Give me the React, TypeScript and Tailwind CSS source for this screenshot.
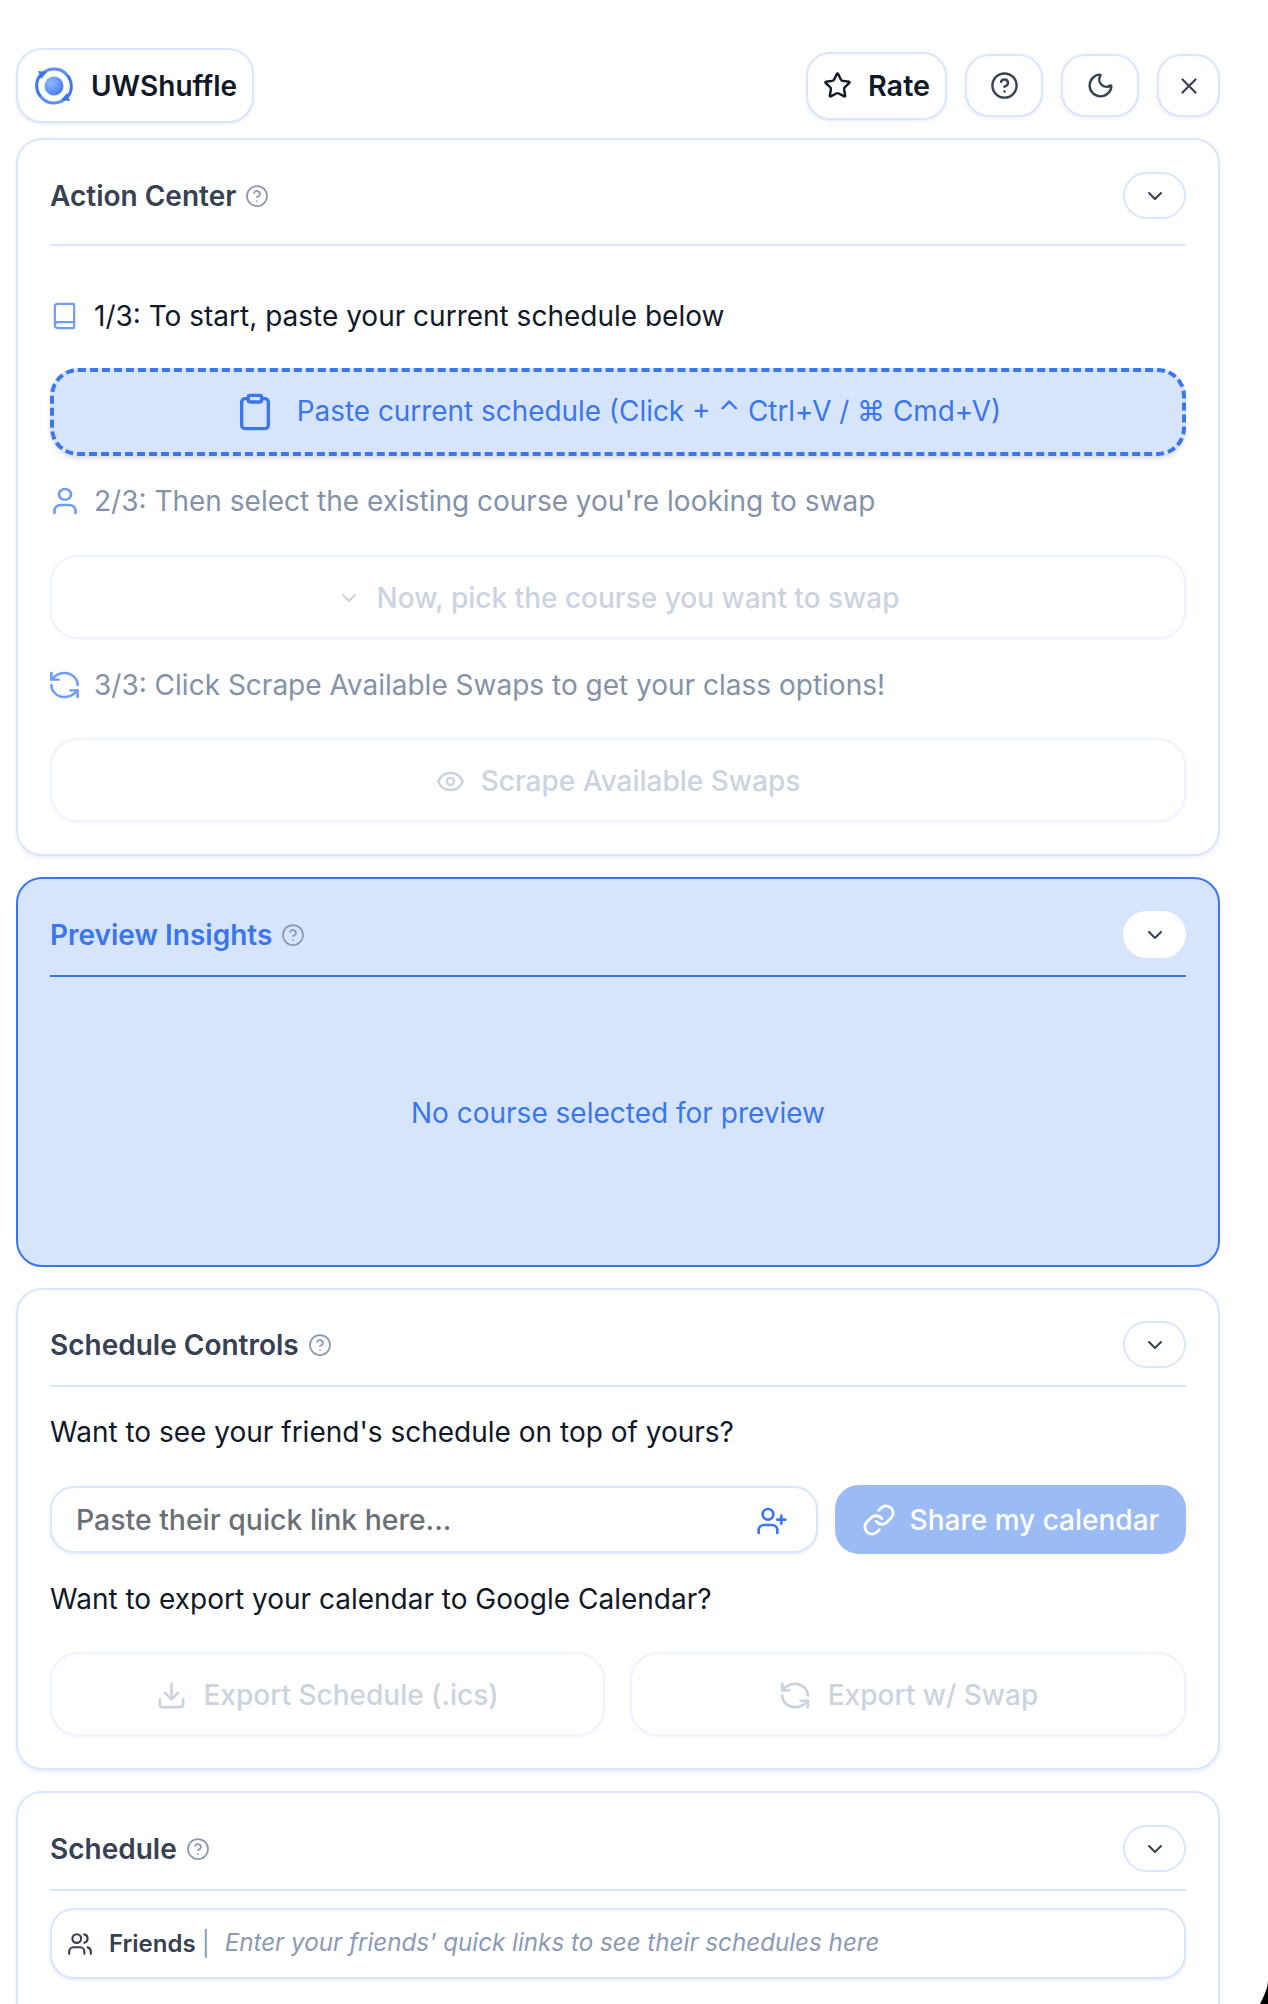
import {
  Book,
  ChevronDown,
  CircleHelp,
  Clipboard,
  Download,
  Eye,
  Link,
  Moon,
  RefreshCcw,
  Star,
  User,
  UserPlus,
  Users,
  X,
} from 'lucide-react';
import type { ReactNode } from 'react';

function Logo() {
  return (
    <svg width="40" height="40" viewBox="0 0 40 40" fill="none">
      <defs>
        <radialGradient id="logoDot" cx="0.35" cy="0.35" r="0.8">
          <stop offset="0" stopColor="#93b8fb" />
          <stop offset="1" stopColor="#3b76ef" />
        </radialGradient>
      </defs>
      <circle cx="20" cy="20" r="9.5" fill="url(#logoDot)" />
      <path d="M8.5 7.5A17 17 0 0 1 33 9" stroke="#5b8ff3" strokeWidth="3" />
      <path d="M31.5 32.5A17 17 0 0 1 7 31" stroke="#5b8ff3" strokeWidth="3" />
      <path d="M6 9.5A17 17 0 0 0 7 31" stroke="#3b76ef" strokeWidth="3" />
      <path d="M34 30.5A17 17 0 0 0 33 9" stroke="#3b76ef" strokeWidth="3" />
      <path d="M4 5l9 1-6 7z" fill="#3b76ef" />
      <path d="M36 35l-9-1 6-7z" fill="#3b76ef" />
    </svg>
  );
}

function IconButton({ className, children }: { className: string; children: ReactNode }) {
  return (
    <button
      className={`flex items-center justify-center rounded-[24px] border-2 border-[#dbe6fe] bg-white text-[#374151] shadow-[0_1px_3px_rgba(59,118,239,0.15)] ${className}`}
    >
      {children}
    </button>
  );
}

function CardHeader({
  title,
  active,
  pad = 'pt-[32px] pb-[17px]',
}: {
  title: string;
  active?: boolean;
  pad?: string;
}) {
  return (
    <div
      className={`flex items-center justify-between border-b-2 ${pad} ${
        active ? 'border-[#3b76ef]' : 'border-[#dbe6fe]'
      }`}
    >
      <div className="flex items-center gap-[9px]">
        <h2
          className={`text-[28px] leading-[40px] font-semibold ${
            active ? 'text-[#3b76ef]' : 'text-[#374151]'
          }`}
        >
          {title}
        </h2>
        <CircleHelp size={24} strokeWidth={1.75} className="text-[#8a9ab5]" />
      </div>
      <button
        className={`flex h-[47px] w-[63px] items-center justify-center rounded-full ${
          active ? 'bg-white' : 'border-2 border-[#dbe6fe] bg-white'
        }`}
      >
        <ChevronDown size={24} className="text-[#374151]" />
      </button>
    </div>
  );
}

function Step({ icon, text, muted, className }: { icon: ReactNode; text: string; muted?: boolean; className: string }) {
  return (
    <div className={`flex h-[40px] items-center gap-[15px] ${className}`}>
      <span className="flex w-[29px] justify-center text-[#6d9df5]">{icon}</span>
      <span className={`text-[28px] ${muted ? 'text-[#8492a8]' : 'text-[#111827]'}`}>{text}</span>
    </div>
  );
}

function DisabledButton({ icon, text, className }: { icon: ReactNode; text: string; className: string }) {
  return (
    <button
      className={`flex h-[84px] items-center justify-center gap-[16px] rounded-[28px] border-2 border-[#eef3fe] bg-white pt-[2px] text-[28px] font-medium text-[#cbd3e1] shadow-[0_1px_2px_rgba(59,118,239,0.08)] ${className}`}
    >
      {icon}
      {text}
    </button>
  );
}

export default function App() {
  return (
    <div
      className="relative h-[2004px] w-[1268px] overflow-hidden bg-white pt-[48px] pl-[16px] pr-[48px]"
      style={{ fontFamily: 'Inter, "Liberation Sans", "DejaVu Sans", sans-serif' }}
    >
      {/* Top bar */}
      <header className="flex h-[75px] items-center justify-between">
        <div className="flex h-[75px] w-[238px] items-center gap-[17px] rounded-[26px] border-2 border-[#dbe6fe] bg-white pl-[16px] shadow-[0_1px_3px_rgba(59,118,239,0.15)]">
          <Logo />
          <span className="text-[28px] font-semibold text-[#111827]">UWShuffle</span>
        </div>
        <div className="flex items-center gap-[18px]">
          <button className="flex h-[68px] w-[141px] items-center justify-center gap-[16px] rounded-[24px] border-2 border-[#dbe6fe] bg-white text-[28.8px] font-semibold text-[#111827] shadow-[0_1px_3px_rgba(59,118,239,0.15)]">
            <Star size={29} />
            Rate
          </button>
          <IconButton className="h-[63px] w-[78px]">
            <CircleHelp size={29} />
          </IconButton>
          <IconButton className="h-[63px] w-[78px]">
            <Moon size={29} />
          </IconButton>
          <IconButton className="h-[63px] w-[63px]">
            <X size={26} />
          </IconButton>
        </div>
      </header>

      <main className="mt-[15px] flex flex-col gap-[21px]">
        {/* Action Center */}
        <section className="rounded-[26px] border-2 border-[#dbe6fe] bg-white px-[32px] pb-[32px] shadow-[0_2px_4px_rgba(59,118,239,0.12)]">
          <CardHeader title="Action Center" pad="pt-[32px] pb-[25px]" />
          <Step
            icon={<Book size={32} strokeWidth={1.8} />}
            text="1/3: To start, paste your current schedule below"
            className="mt-[50px]"
          />
          <button className="mt-[32px] flex h-[88px] w-full items-center justify-center gap-[22px] rounded-[28px] border-4 border-dashed border-[#3b76ef] bg-[#d6e5fb] text-[27.9px] text-[#3b76ef] shadow-md">
            <Clipboard size={40} />
            Paste current schedule (Click + ⌃ Ctrl+V / ⌘ Cmd+V)
          </button>
          <Step
            icon={<User preserveAspectRatio="none" strokeWidth={1.8} className="h-[32px] w-[36px] shrink-0" />}
            text="2/3: Then select the existing course you're looking to swap"
            muted
            className="mt-[25px]"
          />
          <DisabledButton
            icon={<ChevronDown size={24} />}
            text="Now, pick the course you want to swap"
            className="mt-[34px] w-full"
          />
          <Step
            icon={<RefreshCcw preserveAspectRatio="none" strokeWidth={1.8} className="h-[32px] w-[35px] shrink-0" />}
            text="3/3: Click Scrape Available Swaps to get your class options!"
            muted
            className="mt-[26px]"
          />
          <DisabledButton icon={<Eye size={29} />} text="Scrape Available Swaps" className="mt-[33px] w-full" />
        </section>

        {/* Preview Insights */}
        <section className="rounded-[26px] border-2 border-[#3b76ef] bg-[#d6e5fb] px-[32px]">
          <CardHeader title="Preview Insights" active />
          <div className="flex h-[288px] items-center justify-center pb-[16px] text-[28px] text-[#3b76ef]">
            No course selected for preview
          </div>
        </section>

        {/* Schedule Controls */}
        <section className="rounded-[26px] border-2 border-[#dbe6fe] bg-white px-[32px] pb-[32px] shadow-[0_2px_4px_rgba(59,118,239,0.12)]">
          <CardHeader title="Schedule Controls" pad="pt-[31px] pb-[17px]" />
          <p className="mt-[25px] h-[40px] text-[28px] leading-[40px] text-[#111827]">
            Want to see your friend's schedule on top of yours?
          </p>
          <div className="mt-[33px] flex items-center gap-[17px]">
            <div className="flex h-[67px] w-[768px] items-center justify-between rounded-[24px] border-2 border-[#dbe6fe] bg-white pl-[24px] pr-[28px] pt-[2px] shadow-[0_1px_3px_rgba(59,118,239,0.15)]">
              <span className="text-[28.4px] font-medium text-[#6b6f76]">Paste their quick link here...</span>
              <UserPlus size={32} className="text-[#3b76ef]" />
            </div>
            <button className="flex h-[69px] flex-1 items-center justify-center gap-[14px] rounded-[24px] bg-[#9bbbf4] text-[28px] font-medium text-white">
              <Link size={34} />
              Share my calendar
            </button>
          </div>
          <p className="mt-[25px] h-[40px] text-[28px] leading-[40px] text-[#111827]">
            Want to export your calendar to Google Calendar?
          </p>
          <div className="mt-[33px] flex gap-[25px]">
            <DisabledButton icon={<Download size={31} />} text="Export Schedule (.ics)" className="w-[555px]" />
            <DisabledButton
              icon={<RefreshCcw preserveAspectRatio="none" className="h-[31px] w-[34px] shrink-0" />}
              text="Export w/ Swap"
              className="flex-1"
            />
          </div>
        </section>

        {/* Schedule */}
        <section className="rounded-[26px] border-2 border-[#dbe6fe] bg-white px-[32px] pb-[60px] shadow-[0_2px_4px_rgba(59,118,239,0.12)]">
          <CardHeader title="Schedule" />
          <div className="mt-[17px] flex h-[71px] items-center rounded-[24px] border-2 border-[#dbe6fe] bg-white pl-[15px] shadow-[0_1px_3px_rgba(59,118,239,0.15)]">
            <Users size={26} className="text-[#374151]" />
            <span className="ml-[16px] text-[24px] font-semibold text-[#374151]">Friends</span>
            <span className="ml-[6px] text-[24px] text-[#8a9ab5]">|</span>
            <span className="ml-[15px] text-[24.2px] italic text-[#8a9ab5]">
              Enter your friends' quick links to see their schedules here
            </span>
          </div>
        </section>
      </main>

      {/* Window corner at the bottom right */}
      <svg className="absolute right-0 bottom-0" width="8" height="24" viewBox="0 0 8 24">
        <path d="M8 0C8 8 4 16 0 24H8Z" fill="#000" />
      </svg>
    </div>
  );
}
